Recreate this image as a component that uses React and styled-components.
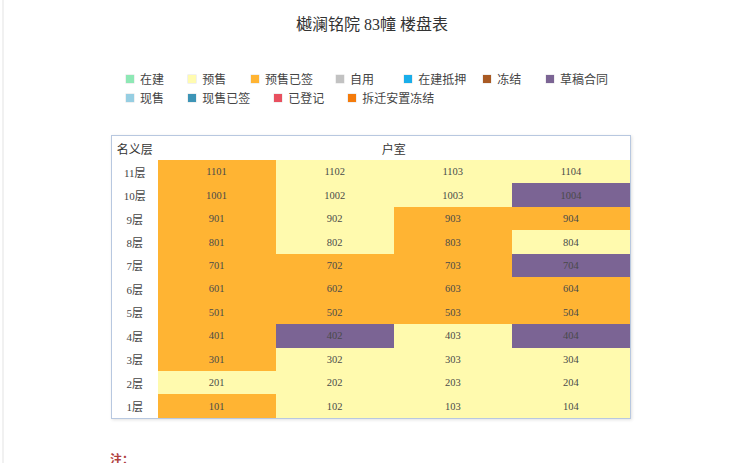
import React from "react";
import styled, { createGlobalStyle } from "styled-components";

const Global = createGlobalStyle`
  html, body { margin: 0; padding: 0; background: #fff; }
  body { font-family: "Liberation Serif", "Noto Sans CJK SC", serif; color: #333; }
`;

const Page = styled.div`
  margin-left: 2px;
  border-left: 2px solid #f1f1f1;
  height: 463px;
  overflow: hidden;
  display: flex;
  flex-direction: column;
`;

const TopRule = styled.div`
  height: 2px;
  margin: 0 8px 0 8px;
  background: #e9e9e9;
`;

const Title = styled.h1`
  margin: 15px 0 0;
  font-size: 16px;
  line-height: 20px;
  font-weight: normal;
  text-align: center;
  color: #333;
`;

const Legend = styled.div`
  margin: 34px 0 0 122px;
  display: flex;
  flex-direction: column;
`;

const LegendRow = styled.div`
  display: flex;
  height: 19px;
  align-items: center;
`;

const LegendItem = styled.div`
  display: flex;
  align-items: center;
  flex: none;
  width: ${(p) => (p.$w ? `${p.$w}px` : "auto")};
  font-size: 12px;
  color: #444;
  white-space: nowrap;
`;

const Swatch = styled.span`
  width: 8px;
  height: 8px;
  margin-right: 6px;
  background: ${(p) => p.$c};
  box-shadow: 0 0 0 0.5px rgba(0, 0, 0, 0.12);
`;

const Table = styled.div`
  margin: 28px 0 0 107px;
  width: 518px;
  border: 1px solid #b8c8e0;
  box-shadow: 1px 1px 3px rgba(0, 0, 0, 0.12);
  display: grid;
  grid-template-columns: 45.5px repeat(4, 1fr);
  grid-template-rows: 24px repeat(11, 23.45px);
  background: #fff;
`;

const HeadCell = styled.div`
  display: flex;
  align-items: center;
  justify-content: center;
  padding-top: 2px;
  font-size: 12px;
  color: #333;
  grid-column: ${(p) => p.$span || "auto"};
`;

const FloorCell = styled.div`
  display: flex;
  align-items: center;
  justify-content: center;
  font-size: 11px;
  color: #444;
`;

const statusColors = {
  O: "#FFB433",
  Y: "#FFFAAE",
  P: "#7B6494",
};

const RoomCell = styled.div`
  display: flex;
  align-items: center;
  justify-content: center;
  font-size: 10.5px;
  color: #4a4a4a;
  background: ${(p) => statusColors[p.$s]};
`;

const Note = styled.div`
  margin: 33px 0 0 106px;
  font-size: 12px;
  line-height: 16px;
  font-weight: bold;
  color: #b0413e;
`;

const legendRows = [
  [
    { t: "在建", c: "#8EE8B5", w: 62.3 },
    { t: "预售", c: "#FFFBB0", w: 62.7 },
    { t: "预售已签", c: "#FFB433", w: 85 },
    { t: "自用", c: "#C2C2C2", w: 68.3 },
    { t: "在建抵押", c: "#1AAEEA", w: 79 },
    { t: "冻结", c: "#A95A24", w: 62.7 },
    { t: "草稿合同", c: "#7B6494" },
  ],
  [
    { t: "现售", c: "#96CEE2", w: 62.3 },
    { t: "现售已签", c: "#3D94B6", w: 86 },
    { t: "已登记", c: "#E8505F", w: 74 },
    { t: "拆迁安置冻结", c: "#F47B0B" },
  ],
];

const floors = [
  [11, "OYYY"],
  [10, "OYYP"],
  [9, "OYOO"],
  [8, "OYOY"],
  [7, "OOOP"],
  [6, "OOOO"],
  [5, "OOOO"],
  [4, "OPYP"],
  [3, "OYYY"],
  [2, "YYYY"],
  [1, "OYYY"],
];

export default function App() {
  return (
    <>
      <Global />
      <Page>
        <TopRule />
        <Title>樾澜铭院 83幢 楼盘表</Title>
        <Legend>
          {legendRows.map((row, i) => (
            <LegendRow key={i}>
              {row.map((it) => (
                <LegendItem key={it.t} $w={it.w}>
                  <Swatch $c={it.c} />
                  {it.t}
                </LegendItem>
              ))}
            </LegendRow>
          ))}
        </Legend>
        <Table>
          <HeadCell>名义层</HeadCell>
          <HeadCell $span="span 4">户室</HeadCell>
          {floors.map(([f, s]) => (
            <React.Fragment key={f}>
              <FloorCell>{f}层</FloorCell>
              {s.split("").map((st, i) => (
                <RoomCell key={i} $s={st}>
                  {f * 100 + i + 1}
                </RoomCell>
              ))}
            </React.Fragment>
          ))}
        </Table>
        <Note>注：</Note>
      </Page>
    </>
  );
}
